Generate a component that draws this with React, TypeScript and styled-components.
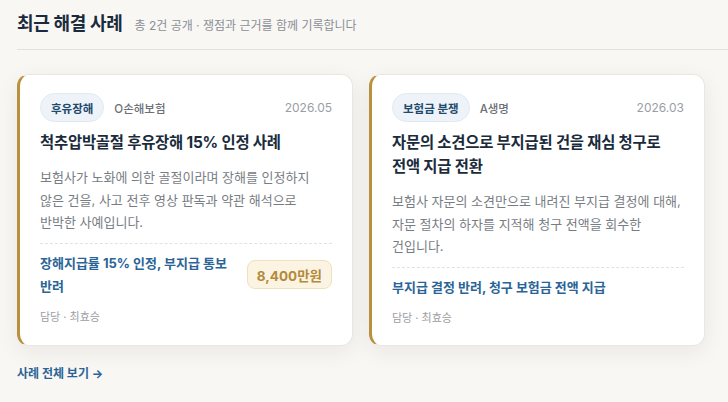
import styled, { createGlobalStyle } from 'styled-components';

const GlobalStyle = createGlobalStyle`
  html, body {
    margin: 0;
    padding: 0;
    background: #f8f7f4;
    font-family: Inter, "Noto Sans CJK KR", "Noto Sans", sans-serif;
  }
  * { box-sizing: border-box; }
`;

const Section = styled.section`
  padding: 9px 0 0 17px;
  width: 728px;
  height: 402px;
  overflow: hidden;
  word-break: keep-all;
`;

const Header = styled.header`
  display: flex;
  align-items: baseline;
  gap: 12px;
  padding-bottom: 14px;
  border-bottom: 1px solid #e4e1da;
`;

const Title = styled.h2`
  margin: 0;
  font-size: 18px;
  font-weight: 700;
  color: #1a2b3c;
  letter-spacing: -0.3px;
`;

const Subtitle = styled.span`
  font-size: 12px;
  color: #8a8f96;
`;

const Grid = styled.div`
  display: grid;
  grid-template-columns: 336px 336px;
  gap: 16px;
  margin-top: 24px;
  align-items: stretch;
`;

const Card = styled.article`
  display: flex;
  flex-direction: column;
  background: #fff;
  border: 1px solid #ebe7df;
  border-left: 3px solid #b8913f;
  border-radius: 12px;
  padding: 18px 20px 16px 20px;
  box-shadow: 0 6px 22px rgba(40, 35, 25, 0.07);
  height: 272px;
`;

const Meta = styled.div`
  display: flex;
  align-items: center;
  gap: 10px;
`;

const Tag = styled.span`
  display: inline-flex;
  align-items: center;
  height: 29px;
  padding: 0 10px;
  border-radius: 15px;
  background: #edf3f8;
  border: 1px solid #e1e9f0;
  font-size: 11.5px;
  font-weight: 700;
  color: #1f4a6e;
`;

const Insurer = styled.span`
  font-size: 11.5px;
  font-weight: 500;
  color: #6b7178;
`;

const DateText = styled.span`
  margin-left: auto;
  font-size: 12px;
  color: #9a9ea4;
`;

const CardTitle = styled.h3`
  margin: 9px 0 0;
  font-size: 15.4px;
  font-weight: 700;
  line-height: 24px;
  color: #1a2b3c;
  letter-spacing: -0.2px;
`;

const Desc = styled.p`
  margin: 11px 0 0;
  font-size: 13px;
  line-height: 22.5px;
  color: #787d84;
`;

const Result = styled.div`
  display: flex;
  align-items: center;
  justify-content: space-between;
  gap: 12px;
  margin-top: 9px;
  padding-top: 8px;
  border-top: 1px dashed #e2e2e2;
`;

const Outcome = styled.div`
  flex: 1;
  font-size: 13px;
  font-weight: 700;
  line-height: 23px;
  color: #2a6496;
`;

const Amount = styled.span`
  flex-shrink: 0;
  height: 29px;
  display: inline-flex;
  align-items: center;
  padding: 0 9px;
  border-radius: 8px;
  background: #fbf4e3;
  border: 1px solid #f0e0bc;
  font-size: 13.5px;
  font-weight: 700;
  color: #b48a3c;
`;

const Footer = styled.div`
  margin-top: 10px;
  font-size: 11px;
  color: #9a9ea4;
`;

const MoreLink = styled.a`
  display: inline-block;
  margin-top: 18px;
  font-size: 12px;
  font-weight: 700;
  color: #2a6496;
  text-decoration: none;
`;

type CaseItem = {
  tag: string;
  insurer: string;
  date: string;
  title: string;
  desc: string;
  outcome: string;
  amount?: string;
  staff: string;
};

const cases: CaseItem[] = [
  {
    tag: '후유장해',
    insurer: 'O손해보험',
    date: '2026.05',
    title: '척추압박골절 후유장해 15% 인정 사례',
    desc: '보험사가 노화에 의한 골절이라며 장해를 인정하지 않은 건을, 사고 전후 영상 판독과 약관 해석으로 반박한 사예입니다.',
    outcome: '장해지급률 15% 인정, 부지급 통보 반려',
    amount: '8,400만원',
    staff: '담당 · 최효승',
  },
  {
    tag: '보험금 분쟁',
    insurer: 'A생명',
    date: '2026.03',
    title: '자문의 소견으로 부지급된 건을 재심 청구로 전액 지급 전환',
    desc: '보험사 자문의 소견만으로 내려진 부지급 결정에 대해, 자문 절차의 하자를 지적해 청구 전액을 회수한 건입니다.',
    outcome: '부지급 결정 반려, 청구 보험금 전액 지급',
    staff: '담당 · 최효승',
  },
];

export default function App() {
  return (
    <>
      <GlobalStyle />
      <Section>
        <Header>
          <Title>최근 해결 사례</Title>
          <Subtitle>총 2건 공개 · 쟁점과 근거를 함께 기록합니다</Subtitle>
        </Header>
        <Grid>
          {cases.map((c) => (
            <Card key={c.title}>
              <Meta>
                <Tag>{c.tag}</Tag>
                <Insurer>{c.insurer}</Insurer>
                <DateText>{c.date}</DateText>
              </Meta>
              <CardTitle>{c.title}</CardTitle>
              <Desc>{c.desc}</Desc>
              <Result>
                <Outcome>{c.outcome}</Outcome>
                {c.amount && <Amount>{c.amount}</Amount>}
              </Result>
              <Footer>{c.staff}</Footer>
            </Card>
          ))}
        </Grid>
        <MoreLink href="#">사례 전체 보기 →</MoreLink>
      </Section>
    </>
  );
}
